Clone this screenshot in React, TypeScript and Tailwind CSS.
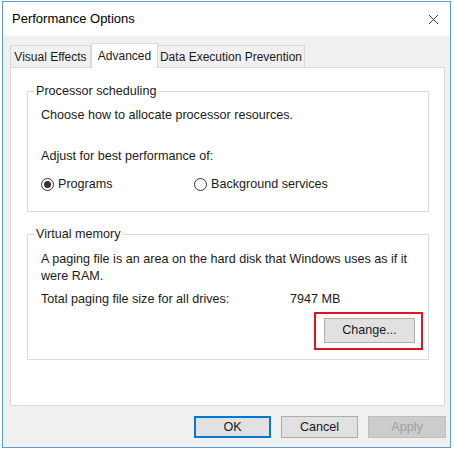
import { X } from "lucide-react"

function Radio({ checked, label }: { checked?: boolean; label: string }) {
  return (
    <div className="flex items-center gap-[4px]">
      <span className="w-[13px] h-[13px] rounded-full border border-[#333333] bg-white flex items-center justify-center">
        {checked && <span className="w-[7px] h-[7px] rounded-full bg-[#333333]" />}
      </span>
      <span>{label}</span>
    </div>
  )
}

export default function App() {
  return (
    <div className="w-[455px] h-[450px] bg-white pl-[2px] pt-[1px] text-[12.6px] text-[#1a1a1a] font-['Liberation_Sans',Arial,sans-serif]">
      <div className="w-[449px] h-[447px] border border-[#5b9bd5] bg-[#f0f0f0] flex flex-col">
        {/* title bar */}
        <div className="h-[34px] bg-white flex items-center justify-between pl-[9px] pr-[8px]">
          <span className="text-[13px] text-black">Performance Options</span>
          <X className="w-[17px] h-[17px] text-[#333333]" strokeWidth={1.3} />
        </div>

        {/* tabs */}
        <div className="flex items-end pl-[7px] pt-[6px] h-[31px] text-[12px]">
          <div className="h-[22px] w-[81px] flex items-center justify-center border border-b-0 border-[#d9d9d9] bg-[#f0f0f0]">Visual Effects</div>
          <div className="h-[25px] w-[67px] flex items-center justify-center border border-b-0 border-[#d9d9d9] bg-white -mb-px z-10">Advanced</div>
          <div className="h-[22px] w-[147px] flex items-center justify-center border border-b-0 border-l-0 border-[#d9d9d9] bg-[#f0f0f0]">Data Execution Prevention</div>
        </div>

        {/* panel */}
        <div className="ml-[7px] mr-[5px] h-[339px] border border-[#d9d9d9] bg-white pl-[16px] pr-[15px] pt-[14px] flex flex-col gap-[13px]">
          <fieldset className="border border-[#dcdcdc] h-[130px]">
            <legend className="ml-[6px] px-[2px]">Processor scheduling</legend>
            <div className="pl-[13px]">
              <div className="pt-[5px]">Choose how to allocate processor resources.</div>
              <div className="pt-[22px]">Adjust for best performance of:</div>
              <div className="flex pt-[9px]">
                <div className="w-[153px]">
                  <Radio checked label="Programs" />
                </div>
                <Radio label="Background services" />
              </div>
            </div>
          </fieldset>

          <fieldset className="border border-[#dcdcdc] h-[135px]">
            <legend className="ml-[6px] px-[2px]">Virtual memory</legend>
            <div className="pl-[13px] pr-[5px]">
              <div className="pt-[7px] leading-[17px]">
                A paging file is an area on the hard disk that Windows uses as if it were RAM.
              </div>
              <div className="flex pt-[5px]">
                <span className="w-[249px]">Total paging file size for all drives:</span>
                <span>7947 MB</span>
              </div>
              <div className="flex justify-end pt-[3px]">
                <div className="border-2 border-[#e0141e] pl-[8px] pr-[6px] pt-[4px] pb-[5px]">
                  <div className="w-[91px] h-[25px] border border-[#adadad] bg-[#e1e1e1] flex items-center justify-center">
                    Change...
                  </div>
                </div>
              </div>
            </div>
          </fieldset>
        </div>

        {/* buttons */}
        <div className="flex justify-end gap-[10px] pr-[4px] pt-[10px]">
          <div className="w-[77px] h-[22px] border-2 border-[#0078d7] bg-[#e1e1e1] flex items-center justify-center">OK</div>
          <div className="w-[77px] h-[22px] border border-[#adadad] bg-[#e1e1e1] flex items-center justify-center">Cancel</div>
          <div className="w-[78px] h-[22px] border border-[#bfbfbf] bg-[#cccccc] text-[#a0a0a0] flex items-center justify-center">Apply</div>
        </div>
      </div>
    </div>
  )
}
